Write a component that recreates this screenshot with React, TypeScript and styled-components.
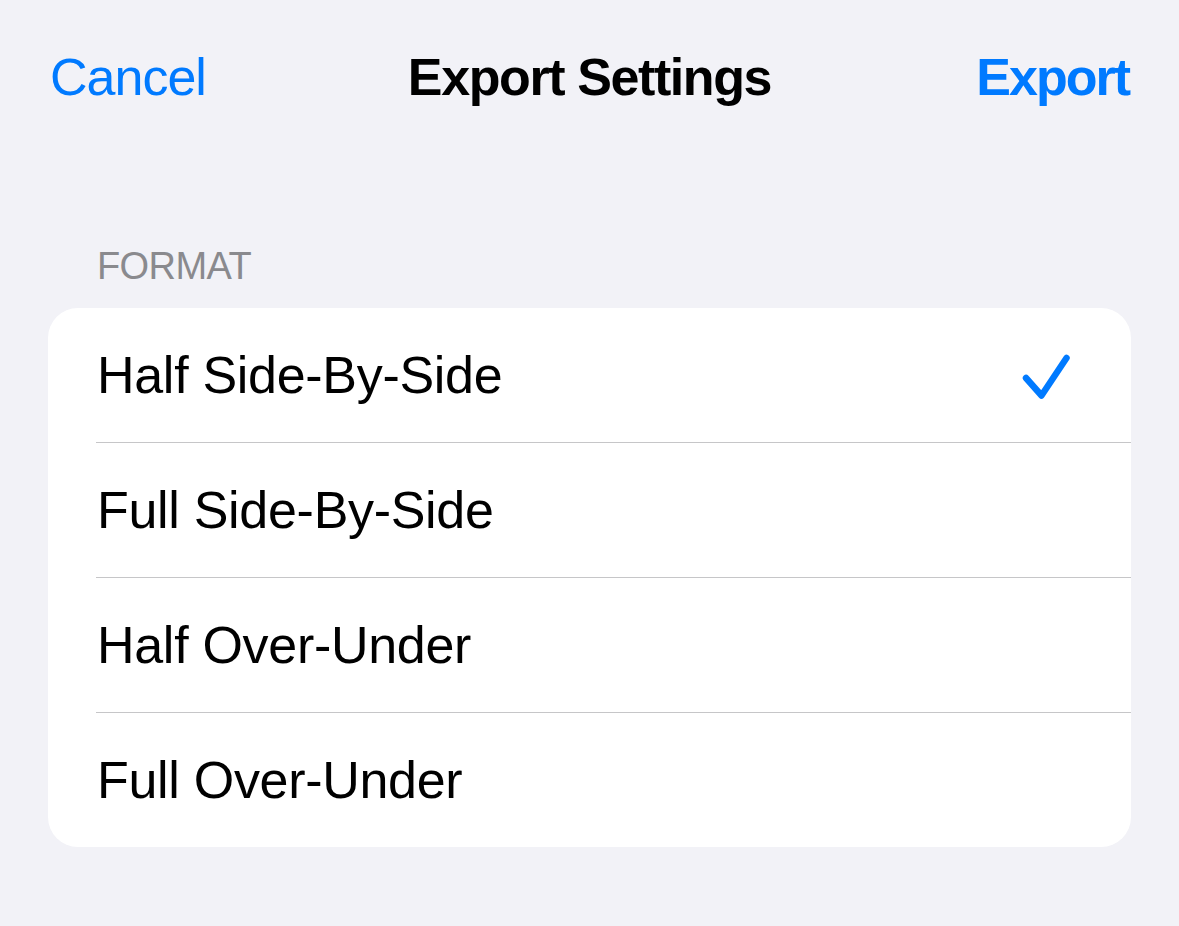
import React from 'react';
import styled, { createGlobalStyle } from 'styled-components';

const formats = ['Half Side-By-Side', 'Full Side-By-Side', 'Half Over-Under', 'Full Over-Under'];

const GlobalStyle = createGlobalStyle`
    html, body {
        margin: 0;
        padding: 0;
        background: #f2f2f7;
    }

    body {
        font-family: 'Liberation Sans', Arial, sans-serif;
        color: #000;
        -webkit-font-smoothing: antialiased;
    }
`;

const Screen = styled.div`
    width: 1179px;
    height: 926px;
    background: #f2f2f7;
    overflow: hidden;
`;

const NavBar = styled.header`
    height: 154px;
    padding: 0 48px;
    display: grid;
    grid-template-columns: 1fr auto 1fr;
    align-items: center;
`;

const NavButton = styled.button<{ $primary?: boolean; $align: 'left' | 'right' }>`
    background: none;
    border: 0;
    padding: 0;
    font-family: inherit;
    font-size: 52px;
    color: #007aff;
    font-weight: ${(p) => (p.$primary ? 700 : 400)};
    letter-spacing: ${(p) => (p.$primary ? '-2px' : '-1px')};
    justify-self: ${(p) => (p.$align === 'left' ? 'start' : 'end')};
    margin: ${(p) => (p.$align === 'left' ? '0 0 0 2px' : '0 2px 0 0')};
    cursor: pointer;
`;

const Title = styled.h1`
    margin: 0;
    font-size: 52px;
    font-weight: 700;
    letter-spacing: -1.4px;
`;

const SectionHeader = styled.h2`
    margin: 89px 0 19px;
    padding-left: 97px;
    font-size: 38px;
    line-height: 46px;
    font-weight: 400;
    letter-spacing: -0.6px;
    color: #8a8a8e;
    text-transform: uppercase;
`;

const Card = styled.ul`
    list-style: none;
    margin: 0 48px;
    padding: 0;
    background: #fff;
    border-radius: 30px;
    overflow: hidden;
`;

const Row = styled.li`
    height: 134px;
    margin-left: 48px;
    padding-right: 60px;
    display: flex;
    align-items: center;
    justify-content: space-between;

    & + & {
        border-top: 1px solid #c6c6c8;
    }
`;

const Label = styled.span`
    font-size: 52px;
    margin-left: 1px;
    letter-spacing: -0.3px;
`;

const Check = () => (
    <svg width="50" height="52" viewBox="0 0 50 52" fill="none" style={{ marginTop: 4 }}>
        <path
            d="M5 27 L20.5 44.5 L45.5 7"
            stroke="#007aff"
            strokeWidth="6.5"
            strokeLinecap="round"
            strokeLinejoin="round"
        />
    </svg>
);

export default function App() {
    const selected = 0;

    return (
        <Screen>
            <GlobalStyle />
            <NavBar>
                <NavButton $align="left">Cancel</NavButton>
                <Title>Export Settings</Title>
                <NavButton $align="right" $primary>
                    Export
                </NavButton>
            </NavBar>
            <SectionHeader>Format</SectionHeader>
            <Card>
                {formats.map((f, i) => (
                    <Row key={f}>
                        <Label>{f}</Label>
                        {i === selected && <Check />}
                    </Row>
                ))}
            </Card>
        </Screen>
    );
}
